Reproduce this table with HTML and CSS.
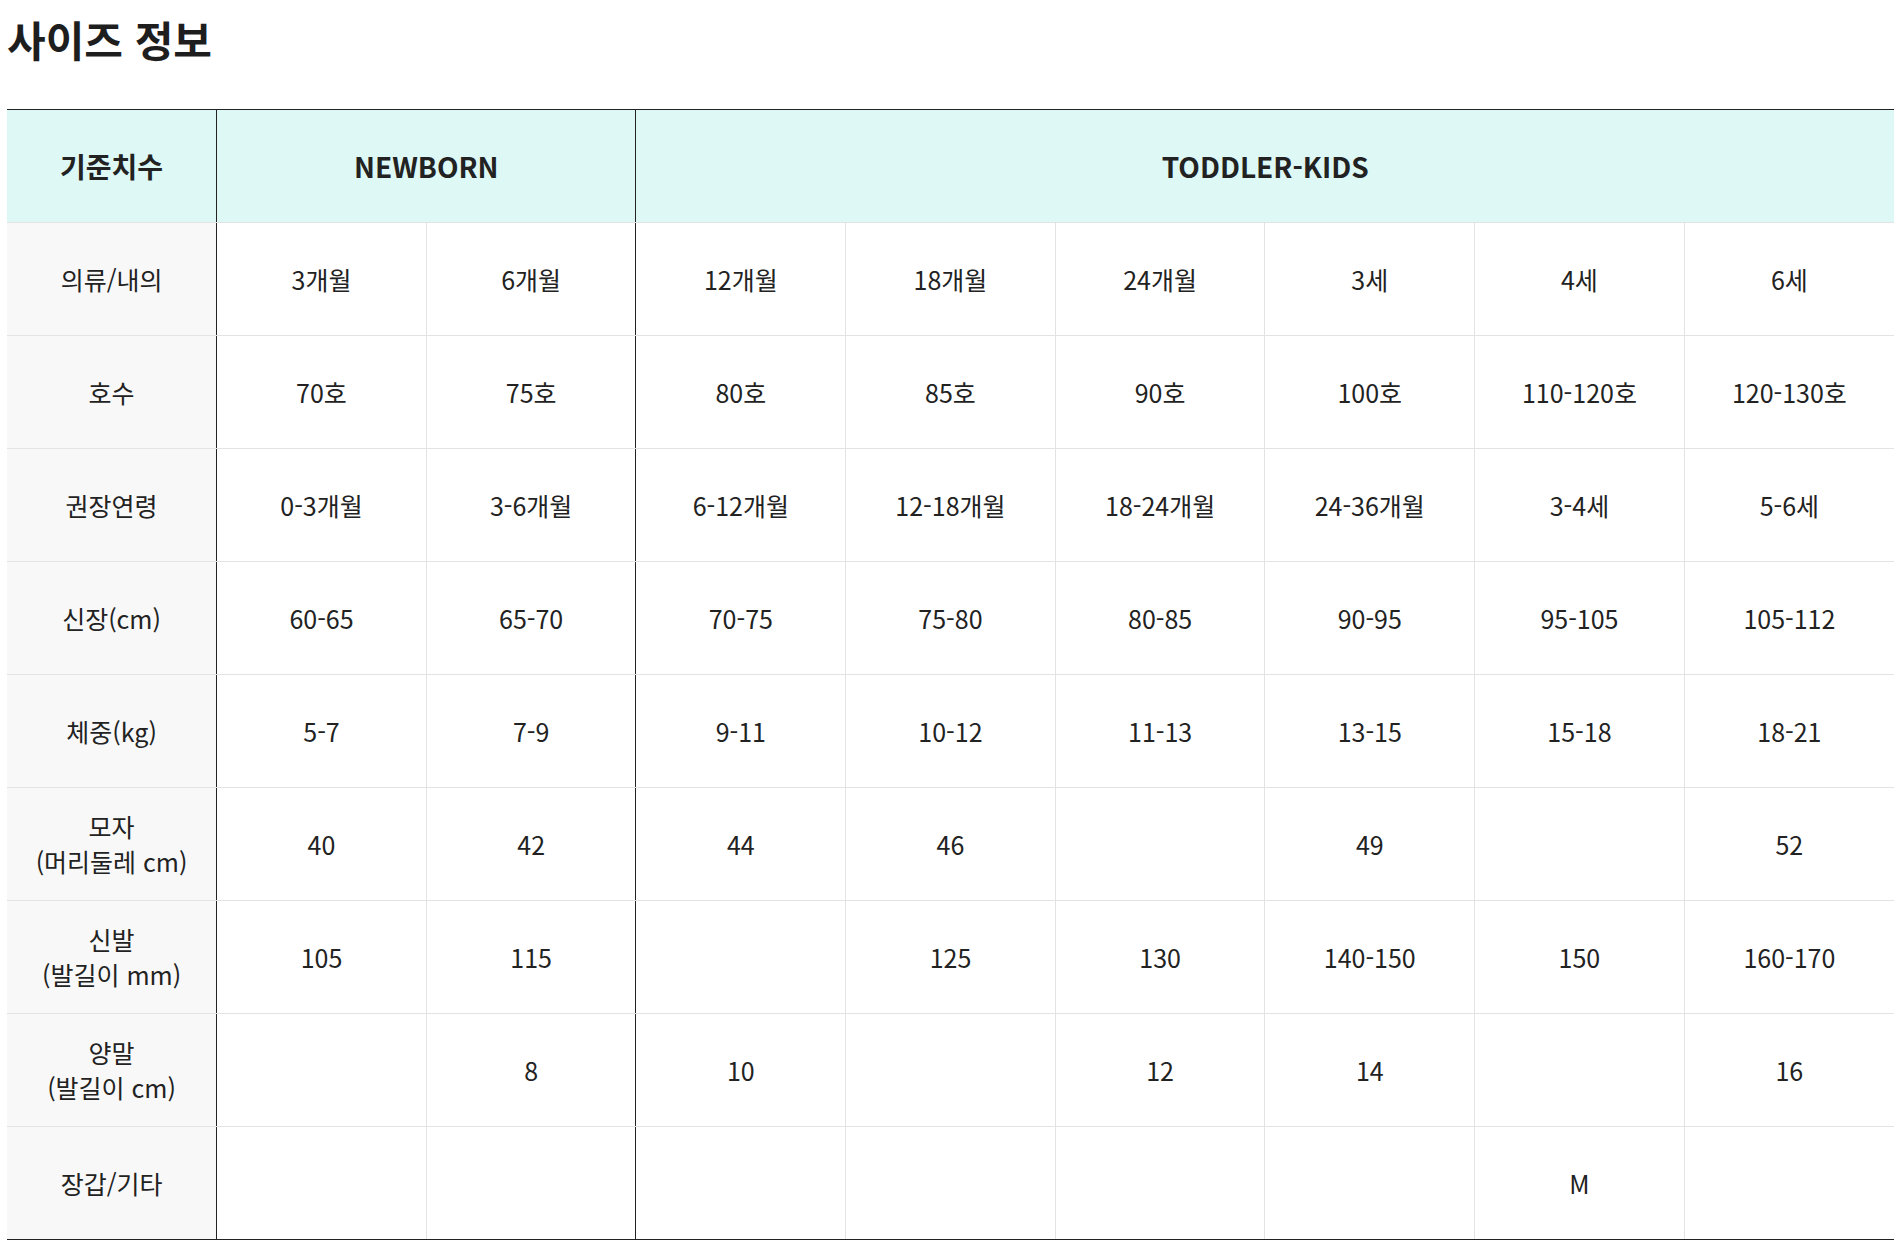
FILE: index.html
```html
<!DOCTYPE html>
<html lang="ko">
<head>
<meta charset="utf-8">
<title>사이즈 정보</title>
<link rel="stylesheet" href="styles.css">
</head>
<body>
<div class="wrap">
  <h2 class="title">사이즈 정보</h2>
  <table class="size-table">
    <colgroup>
      <col><col><col><col><col><col><col><col><col>
    </colgroup>
    <thead>
      <tr>
        <th class="label">기준치수</th>
        <th colspan="2" class="group">NEWBORN</th>
        <th colspan="6">TODDLER-KIDS</th>
      </tr>
    </thead>
    <tbody>
      <tr><th class="label">의류/내의</th><td>3개월</td><td class="group">6개월</td><td>12개월</td><td>18개월</td><td>24개월</td><td>3세</td><td>4세</td><td>6세</td></tr>
      <tr><th class="label">호수</th><td>70호</td><td class="group">75호</td><td>80호</td><td>85호</td><td>90호</td><td>100호</td><td>110-120호</td><td>120-130호</td></tr>
      <tr><th class="label">권장연령</th><td>0-3개월</td><td class="group">3-6개월</td><td>6-12개월</td><td>12-18개월</td><td>18-24개월</td><td>24-36개월</td><td>3-4세</td><td>5-6세</td></tr>
      <tr><th class="label">신장(cm)</th><td>60-65</td><td class="group">65-70</td><td>70-75</td><td>75-80</td><td>80-85</td><td>90-95</td><td>95-105</td><td>105-112</td></tr>
      <tr><th class="label">체중(kg)</th><td>5-7</td><td class="group">7-9</td><td>9-11</td><td>10-12</td><td>11-13</td><td>13-15</td><td>15-18</td><td>18-21</td></tr>
      <tr><th class="label">모자<br>(머리둘레 cm)</th><td>40</td><td class="group">42</td><td>44</td><td>46</td><td></td><td>49</td><td></td><td>52</td></tr>
      <tr><th class="label">신발<br>(발길이 mm)</th><td>105</td><td class="group">115</td><td></td><td>125</td><td>130</td><td>140-150</td><td>150</td><td>160-170</td></tr>
      <tr><th class="label">양말<br>(발길이 cm)</th><td></td><td class="group">8</td><td>10</td><td></td><td>12</td><td>14</td><td></td><td>16</td></tr>
      <tr><th class="label">장갑/기타</th><td></td><td class="group"></td><td></td><td></td><td></td><td></td><td>M</td><td></td></tr>
    </tbody>
  </table>
</div>
</body>
</html>
```
FILE: styles.css
```css
html, body {
  margin: 0;
  padding: 0;
  background: #ffffff;
}
body {
  font-family: "Noto Sans CJK KR", "Noto Sans", sans-serif;
  color: #222222;
}
.wrap {
  padding: 0 2px 0 7px;
}
.title {
  margin: 0;
  padding-top: 9px;
  height: 100px;
  font-size: 42px;
  font-weight: 700;
  line-height: 60px;
  color: #1e1e1e;
}
.size-table {
  width: 100%;
  table-layout: fixed;
  border-collapse: collapse;
  border-top: 1px solid #222222;
  border-bottom: 1px solid #222222;
}
.size-table th,
.size-table td {
  height: 112px;
  padding: 0;
  text-align: center;
  vertical-align: middle;
  font-size: 25px;
  line-height: 35px;
  font-weight: 400;
  border: 1px solid #e3e3e3;
  color: #222222;
}
.size-table thead th {
  background: #ddf8f5;
  font-size: 28px;
  font-weight: 700;
  border-top: 1px solid #222222;
  border-left: none;
  border-right: none;
}
.size-table tr > :first-child {
  border-left: none;
}
.size-table tr > :last-child {
  border-right: none;
}
.size-table .label {
  background: #f8f8f8;
  border-right: 1px solid #222222;
}
.size-table thead .label {
  background: #ddf8f5;
}
.size-table .group {
  border-right: 1px solid #222222;
}
.size-table tbody tr:last-child th,
.size-table tbody tr:last-child td {
  border-bottom: 1px solid #222222;
}
```
